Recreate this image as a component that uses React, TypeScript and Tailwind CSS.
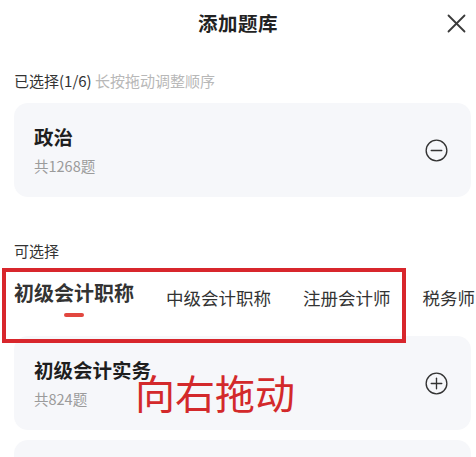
const font = { fontFamily: '"Noto Sans CJK SC", "Noto Sans", sans-serif' };

function CircleIcon({ plus }: { plus?: boolean }) {
  return (
    <svg width="23" height="23" viewBox="0 0 24 24" fill="none" stroke="#333" strokeWidth="1.4" strokeLinecap="round">
      <circle cx="12" cy="12" r="10.8" />
      <line x1="6.5" y1="12" x2="17.5" y2="12" />
      {plus && <line x1="12" y1="6.5" x2="12" y2="17.5" />}
    </svg>
  );
}

function BankCard({ title, count, plus }: { title: string; count: number; plus?: boolean }) {
  return (
    <div className="ml-[14px] mr-[5px] h-[94px] rounded-[14px] bg-[#f6f7fa] pl-[20px] pr-[23px] flex items-center justify-between">
      <div className="flex flex-col">
        <span className="text-[19.5px] leading-[24px] font-bold text-[#1e1e1e]">{title}</span>
        <span className="mt-[7px] text-[14.5px] leading-[20px] text-[#9b9b9b]">共{count}题</span>
      </div>
      <CircleIcon plus={plus} />
    </div>
  );
}

const tabs = ["中级会计职称", "注册会计师", "税务师"];

export default function App() {
  return (
    <div className="relative w-[476px] h-[457px] overflow-hidden bg-white" style={font}>
      <div className="grid grid-cols-[1fr_auto_1fr] items-center h-[46px]">
        <div />
        <h1 className="text-[19.5px] font-bold text-[#222] tracking-[0.5px]">添加题库</h1>
        <div className="flex justify-end pr-[10px]">
          <svg width="19" height="19" viewBox="0 0 19 19" stroke="#3a3a3a" strokeWidth="1.8" strokeLinecap="round">
            <line x1="1.5" y1="1.5" x2="17.5" y2="17.5" />
            <line x1="17.5" y1="1.5" x2="1.5" y2="17.5" />
          </svg>
        </div>
      </div>

      <p className="mt-[25px] pl-[14px] text-[15px] leading-[20px] text-[#333]">
        已选择(1/6) <span className="text-[#b8b8b8]">长按拖动调整顺序</span>
      </p>

      <div className="mt-[12px]">
        <BankCard title="政治" count={1268} />
      </div>

      <p className="mt-[44px] pl-[14px] text-[15px] leading-[20px] text-[#333]">可选择</p>

      <div className="mt-[19px] pl-[14px] flex items-start gap-8 whitespace-nowrap overflow-hidden">
        <div className="flex flex-col items-center shrink-0">
          <span className="text-[20px] leading-[26px] font-bold text-[#333]">初级会计职称</span>
          <span className="mt-[7px] w-[20px] h-[4px] rounded-full bg-[#e2473f]" />
        </div>
        {tabs.map((t) => (
          <span key={t} className="shrink-0 pt-[6px] text-[17.5px] leading-[24px] text-[#333]">{t}</span>
        ))}
      </div>

      <div className="mt-[19px]">
        <BankCard title="初级会计实务" count={824} plus />
      </div>
      <div className="mt-[10px] ml-[14px] mr-[5px] h-[94px] rounded-[14px] bg-[#f6f7fa]" />

      {/* annotation overlays */}
      <div className="absolute left-[2px] top-[268px] w-[404px] h-[75px] border-[4px] border-[#d8262c]" />
      <span className="absolute left-[135px] top-[370px] text-[40px] leading-[44px] text-[#d3292b]">向右拖动</span>
    </div>
  );
}
